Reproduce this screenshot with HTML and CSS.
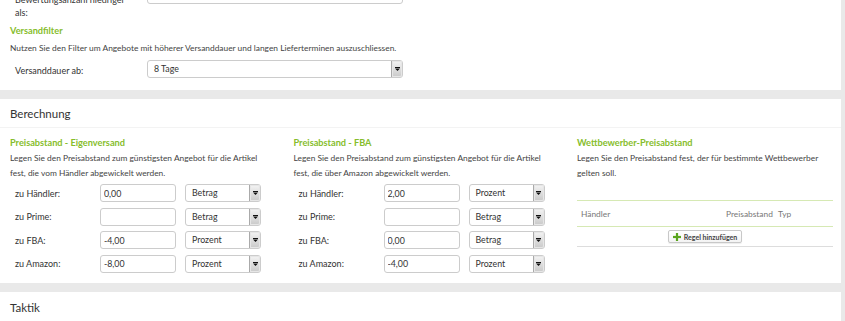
FILE: index.html
```html
<!DOCTYPE html>
<html lang="de">
<head>
<meta charset="utf-8">
<title>Einstellungen</title>
<link rel="stylesheet" href="styles.css">
</head>
<body>
<div class="page">
  <section class="panel panel-top">
    <div class="form-row row-first">
      <label class="top-label first-label">Bewertungsanzahl niedriger als:</label>
      <input class="wide-input" type="text" value="10">
    </div>
    <h3 class="sub-heading top-heading">Versandfilter</h3>
    <p class="desc top-desc">Nutzen Sie den Filter um Angebote mit höherer Versanddauer und langen Lieferterminen auszuschliessen.</p>
    <div class="form-row row-ship">
      <label class="top-label ship-label">Versanddauer ab:</label>
      <div class="select wide-select"><span class="sel-value">8 Tage</span><span class="sel-arrow"><svg width="5" height="4" viewBox="0 0 5 4"><rect x="0" y="0" width="5" height="1" fill="#111"/><polygon points="0,1.5 5,1.5 2.5,4" fill="#111"/></svg></span></div>
    </div>
  </section>

  <section class="panel panel-calc">
    <h2 class="panel-title">Berechnung</h2>
    <div class="calc-grid">
      <div class="col">
        <h3 class="sub-heading">Preisabstand - Eigenversand</h3>
        <p class="desc">Legen Sie den Preisabstand zum günstigsten Angebot für die Artikel fest, die vom Händler abgewickelt werden.</p>
        <div class="rows">
          <div class="calc-row"><label>zu Händler:</label><input type="text" value="0,00"><div class="select"><span class="sel-value">Betrag</span><span class="sel-arrow"><svg width="5" height="4" viewBox="0 0 5 4"><rect x="0" y="0" width="5" height="1" fill="#111"/><polygon points="0,1.5 5,1.5 2.5,4" fill="#111"/></svg></span></div></div>
          <div class="calc-row"><label>zu Prime:</label><input type="text" value=""><div class="select"><span class="sel-value">Betrag</span><span class="sel-arrow"><svg width="5" height="4" viewBox="0 0 5 4"><rect x="0" y="0" width="5" height="1" fill="#111"/><polygon points="0,1.5 5,1.5 2.5,4" fill="#111"/></svg></span></div></div>
          <div class="calc-row"><label>zu FBA:</label><input type="text" value="-4,00"><div class="select"><span class="sel-value">Prozent</span><span class="sel-arrow"><svg width="5" height="4" viewBox="0 0 5 4"><rect x="0" y="0" width="5" height="1" fill="#111"/><polygon points="0,1.5 5,1.5 2.5,4" fill="#111"/></svg></span></div></div>
          <div class="calc-row"><label>zu Amazon:</label><input type="text" value="-8,00"><div class="select"><span class="sel-value">Prozent</span><span class="sel-arrow"><svg width="5" height="4" viewBox="0 0 5 4"><rect x="0" y="0" width="5" height="1" fill="#111"/><polygon points="0,1.5 5,1.5 2.5,4" fill="#111"/></svg></span></div></div>
        </div>
      </div>
      <div class="col">
        <h3 class="sub-heading">Preisabstand - FBA</h3>
        <p class="desc">Legen Sie den Preisabstand zum günstigsten Angebot für die Artikel fest, die über Amazon abgewickelt werden.</p>
        <div class="rows">
          <div class="calc-row"><label>zu Händler:</label><input type="text" value="2,00"><div class="select"><span class="sel-value">Prozent</span><span class="sel-arrow"><svg width="5" height="4" viewBox="0 0 5 4"><rect x="0" y="0" width="5" height="1" fill="#111"/><polygon points="0,1.5 5,1.5 2.5,4" fill="#111"/></svg></span></div></div>
          <div class="calc-row"><label>zu Prime:</label><input type="text" value=""><div class="select"><span class="sel-value">Betrag</span><span class="sel-arrow"><svg width="5" height="4" viewBox="0 0 5 4"><rect x="0" y="0" width="5" height="1" fill="#111"/><polygon points="0,1.5 5,1.5 2.5,4" fill="#111"/></svg></span></div></div>
          <div class="calc-row"><label>zu FBA:</label><input type="text" value="0,00"><div class="select"><span class="sel-value">Betrag</span><span class="sel-arrow"><svg width="5" height="4" viewBox="0 0 5 4"><rect x="0" y="0" width="5" height="1" fill="#111"/><polygon points="0,1.5 5,1.5 2.5,4" fill="#111"/></svg></span></div></div>
          <div class="calc-row"><label>zu Amazon:</label><input type="text" value="-4,00"><div class="select"><span class="sel-value">Prozent</span><span class="sel-arrow"><svg width="5" height="4" viewBox="0 0 5 4"><rect x="0" y="0" width="5" height="1" fill="#111"/><polygon points="0,1.5 5,1.5 2.5,4" fill="#111"/></svg></span></div></div>
        </div>
      </div>
      <div class="col">
        <h3 class="sub-heading">Wettbewerber-Preisabstand</h3>
        <p class="desc">Legen Sie den Preisabstand fest, der für bestimmte Wettbewerber gelten soll.</p>
        <div class="rules">
          <div class="rules-head">
            <span class="th th-dealer">Händler</span>
            <span class="th th-gap">Preisabstand</span>
            <span class="th th-type">Typ</span>
          </div>
          <div class="rules-foot">
            <button class="add-btn" type="button"><svg width="8" height="8" viewBox="0 0 8 8"><rect x="2.9" y="0" width="2.2" height="8" fill="#5aa51e"/><rect x="0" y="2.9" width="8" height="2.2" fill="#5aa51e"/></svg><span>Regel hinzufügen</span></button>
          </div>
        </div>
      </div>
    </div>
  </section>

  <section class="panel panel-tactic">
    <h2 class="panel-title">Taktik</h2>
  </section>
</div>
</body>
</html>
```
FILE: styles.css
```css
* { box-sizing: border-box; }

html, body {
  margin: 0;
  padding: 0;
  background: #e9e9e9;
  overflow: hidden;
}

body {
  font-family: Lato, "Open Sans", "Liberation Sans", sans-serif;
  color: #444;
}

.page {
  width: 841px;
}

.panel {
  background: #fff;
}

.panel + .panel {
  margin-top: 9px;
}

/* shared text */
.sub-heading {
  margin: 0;
  font-size: 9.2px;
  line-height: 14px;
  font-weight: 700;
  color: #86bd2c;
}

.desc {
  margin: 0;
  font-size: 8.4px;
  line-height: 15px;
  color: #444;
}

/* select */
.select {
  display: flex;
  align-items: stretch;
  width: 76px;
  height: 18px;
  border: 1px solid #ccc;
  border-radius: 3px;
  background: #fff;
}

.sel-value {
  flex: 1;
  padding-left: 6px;
  font-size: 8.8px;
  line-height: 16px;
  color: #333;
}

.sel-arrow {
  width: 11px;
  display: flex;
  align-items: center;
  justify-content: center;
  background: linear-gradient(#f4f4f4, #c9c9c9);
  border-left: 1px solid #aaa;
  border-radius: 0 2px 2px 0;
  box-shadow: inset 0 0 0 1px #e6e6e6;
}

/* top panel */
.panel-top {
  margin-top: -14px;
  padding: 0 10px 12px 10px;
}

.form-row {
  display: flex;
  align-items: flex-start;
}

.top-label {
  width: 137px;
  padding-left: 5px;
  padding-top: 7px;
  font-size: 9px;
  line-height: 13px;
  color: #333;
}

.first-label {
  padding-right: 20px;
}

.wide-input {
  width: 256px;
  height: 18px;
  border: 1px solid #ccc;
  border-radius: 3px;
  padding: 0 6px;
  font-family: inherit;
  font-size: 8.8px;
  color: #333;
}

.top-heading {
  margin-top: 5px;
}

.top-desc {
  margin-top: 3px;
  line-height: 14px;
}

.row-ship {
  margin-top: 5px;
}

.ship-label {
  padding-top: 4px;
}

.wide-select {
  width: 256px;
}

/* calc panel */
.panel-title {
  margin: 0;
  height: 29px;
  padding-left: 10px;
  font-size: 11.5px;
  font-weight: 400;
  line-height: 29px;
  color: #333;
  border-bottom: 1px solid #f3f3f3;
}

.panel-calc {
  padding-bottom: 10px;
}

.calc-grid {
  display: grid;
  grid-template-columns: 256px 256px 256px;
  column-gap: 27.5px;
  padding: 8px 10px 0 10px;
}

.calc-grid .desc {
  margin-top: 1px;
}

.rows {
  display: flex;
  flex-direction: column;
  gap: 5.5px;
  margin-top: 3px;
}

.calc-row {
  display: flex;
  align-items: center;
  height: 18px;
}

.calc-row label {
  width: 90px;
  padding-left: 5px;
  font-size: 9px;
  color: #333;
}

.calc-row input {
  width: 76px;
  height: 18px;
  margin-right: 9px;
  border: 1px solid #ccc;
  border-radius: 3px;
  padding: 0 3px;
  font-family: inherit;
  font-size: 8.8px;
  color: #333;
}

/* rules table */
.rules {
  margin-top: 19px;
  border-top: 1px solid #d6e9b4;
}

.rules-head {
  display: flex;
  align-items: center;
  height: 26px;
  border-bottom: 1px solid #d6e9b4;
  font-size: 8.4px;
  color: #777;
}

.th-dealer {
  width: 149px;
  padding-left: 4px;
}

.th-gap {
  width: 52px;
}

.rules-foot {
  display: flex;
  justify-content: center;
  align-items: flex-start;
  height: 20px;
  padding-top: 3px;
  border-bottom: 1px solid #ddd;
}

.add-btn {
  display: flex;
  align-items: center;
  gap: 3px;
  height: 13px;
  padding: 0 4px;
  border: 1px solid #c8c8c8;
  border-radius: 2px;
  background: linear-gradient(#fff, #f3f3f3);
  font-family: inherit;
  font-size: 7px;
  font-weight: 700;
  white-space: nowrap;
  color: #444;
  box-shadow: 0 1px 1px rgba(0,0,0,0.08);
}

/* tactic panel */
.panel-tactic {
  height: 40px;
}

.panel-tactic .panel-title {
  height: 32px;
  line-height: 32px;
  border-bottom: none;
}
```
